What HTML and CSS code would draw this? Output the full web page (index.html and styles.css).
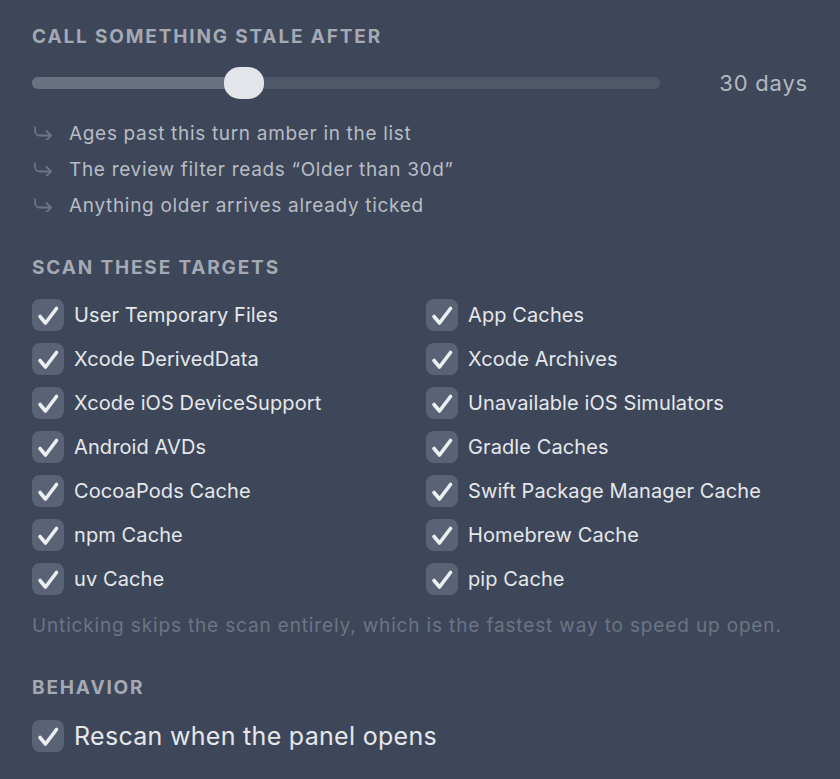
FILE: index.html
```html
<!DOCTYPE html>
<html>
<head>
<meta charset="utf-8">
<link rel="stylesheet" href="styles.css">
</head>
<body>
<div class="panel">
  <h2 class="heading h-first">CALL SOMETHING STALE AFTER</h2>
  <div class="slider-row">
    <div class="track">
      <div class="fill" style="width: 212px"></div>
      <div class="thumb" style="left: 192px"></div>
    </div>
    <div class="value">30 days</div>
  </div>
  <ul class="notes">
    <li><svg class="arrow" viewBox="0 0 20 14"><path d="M2 1.5v3.5a4.5 4.5 0 0 0 4.5 4.5H18M13.5 5l4.5 4.5-4.5 4.5" /></svg><span>Ages past this turn amber in the list</span></li>
    <li><svg class="arrow" viewBox="0 0 20 14"><path d="M2 1.5v3.5a4.5 4.5 0 0 0 4.5 4.5H18M13.5 5l4.5 4.5-4.5 4.5" /></svg><span>The review filter reads “Older than 30d”</span></li>
    <li><svg class="arrow" viewBox="0 0 20 14"><path d="M2 1.5v3.5a4.5 4.5 0 0 0 4.5 4.5H18M13.5 5l4.5 4.5-4.5 4.5" /></svg><span>Anything older arrives already ticked</span></li>
  </ul>

  <h2 class="heading h-second">SCAN THESE TARGETS</h2>
  <div class="grid">
    <label class="check"><span class="box"><svg viewBox="0 0 32 32"><path d="M8 17.5l5.5 6.5L24.5 9.5"/></svg></span>User Temporary Files</label>
    <label class="check"><span class="box"><svg viewBox="0 0 32 32"><path d="M8 17.5l5.5 6.5L24.5 9.5"/></svg></span>App Caches</label>
    <label class="check"><span class="box"><svg viewBox="0 0 32 32"><path d="M8 17.5l5.5 6.5L24.5 9.5"/></svg></span>Xcode DerivedData</label>
    <label class="check"><span class="box"><svg viewBox="0 0 32 32"><path d="M8 17.5l5.5 6.5L24.5 9.5"/></svg></span>Xcode Archives</label>
    <label class="check"><span class="box"><svg viewBox="0 0 32 32"><path d="M8 17.5l5.5 6.5L24.5 9.5"/></svg></span>Xcode iOS DeviceSupport</label>
    <label class="check"><span class="box"><svg viewBox="0 0 32 32"><path d="M8 17.5l5.5 6.5L24.5 9.5"/></svg></span>Unavailable iOS Simulators</label>
    <label class="check"><span class="box"><svg viewBox="0 0 32 32"><path d="M8 17.5l5.5 6.5L24.5 9.5"/></svg></span>Android AVDs</label>
    <label class="check"><span class="box"><svg viewBox="0 0 32 32"><path d="M8 17.5l5.5 6.5L24.5 9.5"/></svg></span>Gradle Caches</label>
    <label class="check"><span class="box"><svg viewBox="0 0 32 32"><path d="M8 17.5l5.5 6.5L24.5 9.5"/></svg></span>CocoaPods Cache</label>
    <label class="check"><span class="box"><svg viewBox="0 0 32 32"><path d="M8 17.5l5.5 6.5L24.5 9.5"/></svg></span>Swift Package Manager Cache</label>
    <label class="check"><span class="box"><svg viewBox="0 0 32 32"><path d="M8 17.5l5.5 6.5L24.5 9.5"/></svg></span>npm Cache</label>
    <label class="check"><span class="box"><svg viewBox="0 0 32 32"><path d="M8 17.5l5.5 6.5L24.5 9.5"/></svg></span>Homebrew Cache</label>
    <label class="check"><span class="box"><svg viewBox="0 0 32 32"><path d="M8 17.5l5.5 6.5L24.5 9.5"/></svg></span>uv Cache</label>
    <label class="check"><span class="box"><svg viewBox="0 0 32 32"><path d="M8 17.5l5.5 6.5L24.5 9.5"/></svg></span>pip Cache</label>
  </div>
  <p class="note">Unticking skips the scan entirely, which is the fastest way to speed up open.</p>

  <h2 class="heading h-third">BEHAVIOR</h2>
  <label class="check check-large"><span class="box"><svg viewBox="0 0 32 32"><path d="M8 17.5l5.5 6.5L24.5 9.5"/></svg></span>Rescan when the panel opens</label>
</div>
</body>
</html>
```

FILE: styles.css
```css
html, body {
  margin: 0;
  padding: 0;
  background: #3e4759;
}
body {
  font-family: Inter, "Noto Sans", "Liberation Sans", sans-serif;
  -webkit-font-smoothing: antialiased;
}
.panel {
  padding: 24px 32px 0 32px;
  width: 840px;
  height: 779px;
  box-sizing: border-box;
}
.heading {
  margin: 0;
  font-size: 19px;
  line-height: 24px;
  font-weight: 700;
  letter-spacing: 1.85px;
  color: #a4a9b3;
}
.h-first {
  padding-top: 1px;
  line-height: 23px;
}
.slider-row {
  margin-top: 19px;
  display: flex;
  align-items: center;
  gap: 24px;
  height: 32px;
}
.track {
  position: relative;
  flex: 1;
  height: 12px;
  border-radius: 6px;
  background: #4f5869;
}
.fill {
  height: 12px;
  border-radius: 6px 0 0 6px;
  background: #6a7282;
}
.thumb {
  position: absolute;
  top: -10px;
  width: 40px;
  height: 32px;
  border-radius: 16px / 15px;
  background: #e3e5ea;
}
.value {
  width: 124px;
  text-align: right;
  font-size: 22px;
  letter-spacing: 0.8px;
  color: #b3b7c0;
}
.notes {
  list-style: none;
  margin: 16px 0 0 0;
  padding: 0;
}
.notes li {
  display: flex;
  align-items: center;
  height: 36px;
  font-size: 19px;
  letter-spacing: 0.68px;
  color: #b8bcc4;
}
.arrow {
  width: 20px;
  height: 14px;
  margin-left: 1px;
  margin-right: 16px;
  fill: none;
  stroke: #6c7484;
  stroke-width: 1.8;
  stroke-linecap: round;
  stroke-linejoin: round;
}
.h-second {
  margin-top: 33px;
}
.grid {
  margin-top: 19px;
  display: grid;
  grid-template-columns: 382px 1fr;
  column-gap: 12px;
  row-gap: 12px;
}
.check {
  display: flex;
  align-items: center;
  height: 32px;
  font-size: 20px;
  letter-spacing: 0.1px;
  color: #e5e7eb;
}
.box {
  width: 32px;
  height: 32px;
  border-radius: 8px;
  background: #5a6375;
  margin-right: 10px;
  flex: none;
}
.box svg {
  width: 32px;
  height: 32px;
  display: block;
  fill: none;
  stroke: #eceef1;
  stroke-width: 3.6;
  stroke-linecap: round;
  stroke-linejoin: round;
}
.note {
  margin: 19px 0 0 0;
  font-size: 19px;
  line-height: 24px;
  letter-spacing: 0.85px;
  color: #6c7485;
}
.h-third {
  margin-top: 38px;
}
.check-large {
  margin-top: 20px;
  font-size: 25px;
  letter-spacing: 0.3px;
}
```
